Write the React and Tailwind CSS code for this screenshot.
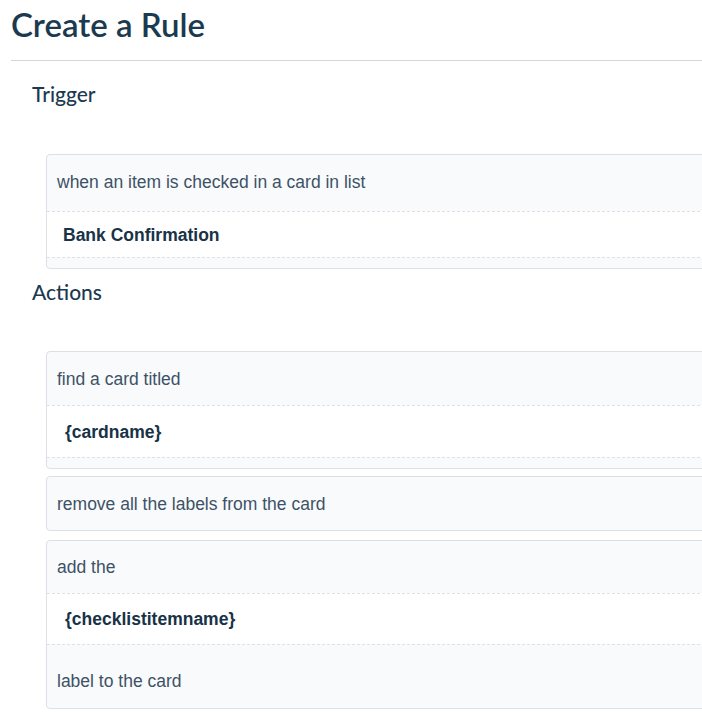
const heading = { fontFamily: "Lato, 'Noto Sans', sans-serif" };
const body = { fontFamily: "'Liberation Sans', Arial, sans-serif" };

function Row({ children, h, bold, white, dashedTop, extra = "" }) {
  return (
    <div
      className={`flex items-center ${h} ${
        white ? "bg-white" : ""
      } ${dashedTop ? "border-t border-dashed border-[#dfe1e6]" : ""} ${
        bold ? "font-bold text-[#183246]" : "pl-[10px] text-[#3d5266]"
      } text-[17.5px] leading-[22px] ${extra}`}
    >
      {children}
    </div>
  );
}

function Card({ children, className = "" }) {
  return (
    <div
      className={`ml-[46px] w-[720px] flex-none rounded-[4px] border border-[#dcdfe5] bg-[#f9fafc] ${className}`}
    >
      {children}
    </div>
  );
}

function SectionLabel({ children, className = "" }) {
  return (
    <h2
      style={heading}
      className={`pl-[32px] text-[21px] leading-[24px] font-medium text-[#1b3a50] ${className}`}
    >
      {children}
    </h2>
  );
}

export default function App() {
  return (
    <div style={body} className="h-[725px] w-[702px] overflow-hidden bg-white">
      <h1
        style={heading}
        className="pl-[11px] pt-[4px] text-[33px] leading-[40px] font-semibold text-[#1b3a50]"
      >
        Create a Rule
      </h1>
      <div className="ml-[11px] mt-[16px] border-t border-[#d6d6d6]" />

      <SectionLabel className="mt-[21px]">Trigger</SectionLabel>
      <Card className="mt-[48px]">
        <Row h="h-[56px]" extra="pb-[2px]">when an item is checked in a card in list</Row>
        <Row h="h-[46px]" bold white dashedTop extra="pl-[16px]">
          Bank Confirmation
        </Row>
        <div className="h-[11px] border-t border-dashed border-[#dfe1e6]" />
      </Card>

      <SectionLabel className="mt-[11px]">Actions</SectionLabel>
      <Card className="mt-[47px]">
        <Row h="h-[53px]">find a card titled</Row>
        <Row h="h-[52px]" bold white dashedTop extra="pl-[18px]">
          {"{cardname}"}
        </Row>
        <div className="h-[11px] border-t border-dashed border-[#dfe1e6]" />
      </Card>
      <Card className="mt-[7px]">
        <Row h="h-[53px]">remove all the labels from the card</Row>
      </Card>
      <Card className="mt-[9px]">
        <Row h="h-[52px]">add the</Row>
        <Row h="h-[51px]" bold white dashedTop extra="pl-[18px]">
          {"{checklistitemname}"}
        </Row>
        <Row h="h-[64px]" dashedTop extra="pt-[8px]">
          label to the card
        </Row>
      </Card>
    </div>
  );
}
